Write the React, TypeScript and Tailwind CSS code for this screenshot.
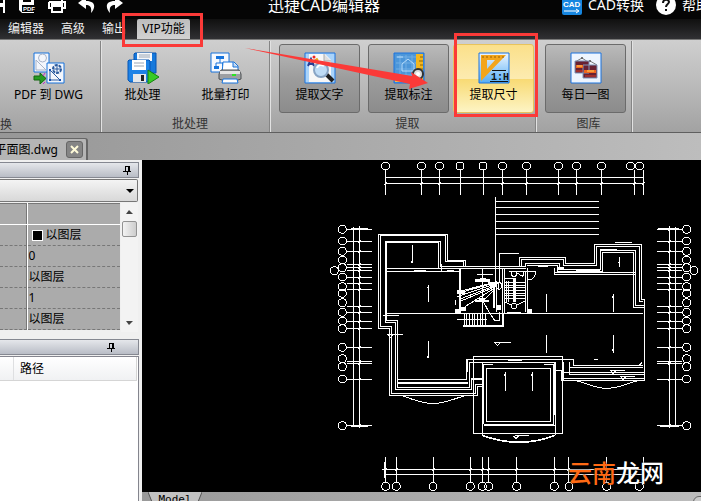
import type { ReactNode } from "react";

const layerRows = [
  { value: "以图层", swatch: true },
  { value: "0", swatch: false },
  { value: "以图层", swatch: false },
  { value: "1", swatch: false },
  { value: "以图层", swatch: false },
];

const topAxis = [182, 289, 343, 405, 474, 532, 604, 700, 755, 830, 916, 943];
const topTicks = [182, 289, 343, 405, 474, 532, 604, 700, 755, 830, 928, 955];
const bottomAxis = [182, 214, 324, 436, 472, 491, 575, 688, 732, 845, 943];
const bottomTicks = [181, 214, 325, 436, 472, 491, 575, 688, 730, 845, 955];
const sideAxis = [223, 258, 289, 315, 338, 366, 395, 415, 443, 472, 498, 521, 577, 611, 635, 672, 812];
const sideTicks = [222, 259, 289, 328, 337, 346, 367, 386, 403, 454, 472, 499, 520, 577, 618, 625, 672, 812];
const hatch = [139, 157, 178, 199, 220, 238];
const treads = [127, 135, 143, 151, 159, 167, 175];
const risers = [42, 50, 58, 66, 74, 82, 90, 98, 106];

function FloorPlan() {
  return (
    <svg
      viewBox="-549 15 1677 996"
      preserveAspectRatio="xMinYMin meet"
      className="block w-full"
      fill="none"
      stroke="#fff"
      strokeWidth="3"
      shapeRendering="crispEdges"
      role="img"
      aria-label="平面图"
    >
      {topAxis.map((x) => <circle key={x} cx={x} cy={33} r={12} />)}
      {topTicks.map((x) => <path key={x} d={`M${x} 45V119M${x - 4} 88l8 -6`} />)}
      <path d="M180 67H958M180 85H958M180 60V119" />
      {hatch.map((y) => <path key={y} d={`M512 ${y}H822`} />)}
      <path d="M512 126V385M524 385V295H582" />

      {sideAxis.map((y) => (
        <g key={y}>
          <circle cx={52} cy={y} r={12} />
          <circle cx={1085} cy={y} r={12} />
        </g>
      ))}
      {sideTicks.map((y) => (
        <path key={y} d={`M65 ${y}H141M100 ${y + 4}l7 -8M996 ${y}H1072M1029 ${y + 4}l7 -8`} />
      ))}
      <circle cx={28} cy={347} r={12} />
      <circle cx={1107} cy={347} r={12} />
      <path d="M85 215V817M103 213V820M1033 213V820M1052 215V817" />
      <path d="M79 220H130M79 813H130M1000 220H1062M1006 813H1062" strokeWidth="5" />

      {bottomAxis.map((x) => <circle key={x} cx={x} cy={994} r={12} />)}
      {bottomTicks.map((x) => <path key={x} d={`M${x} 906V982M${x - 4} 946l8 -6`} />)}
      <path d="M172 943H955M178 958H955M178 920V968" />

      {/* west wing walls */}
      <path d="M422 335V315H367V237H161V521H194V721H457V693H472" />
      <path d="M416 335V320H362V242H167V515H200V716H452V688H472" />
      <path d="M346 335V258H180V503H211V704H440V672H472" />
      <path d="M341 340V263H185V497H217V698H434V622H690" />
      <path d="M185 340H404M185 348H404M345 340H604M350 335H604M350 326V348M404 348V475M185 475H953" />
      <path d="M266 346H304M366 346H386M219 683H428" strokeWidth="5" />
      <path d="M219 674H425V614H745V632H953M175 481H222M187 538H234M190 540l6 8l8 -8" />
      <path d="M228 721C270 735 290 746 325 746S390 729 425 721" />

      {/* bay room */}
      <path d="M445 605H712V835H445Z" />
      <path d="M475 808V628H504M472 622V840M478 808H685V628H658M690 622V840M484 640H677V800H484Z" />
      <path d="M472 622V840M690 622V780" strokeWidth="5" />
      <path d="M478 811H690" />
      <path d="M472 841Q582 882 691 841" strokeWidth="5" />
      <path d="M569 841H611M566 843l7 7l8 -7M507 562H558M510 564l7 7l8 -7" />
      <path d="M425 614V652M438 670H470M690 646H714V676" strokeWidth="5" />

      {/* east wing walls */}
      <path d="M583 335V308H721V326H809V269H949V434H958V675H710V646" />
      <path d="M589 335V313H716V331H815V274H943V440H953" />
      <path d="M602 335V325H703V343H826V287H931V452H958" />
      <path d="M607 331H698V348H832V292H926V457H958" />
      <path d="M688 340V358H931M688 352H931M870 263H920M826 282H875" />
      <path d="M733 622V658H958M735 638H953M716 652H958M716 622V670H958" />
      <path d="M750 631H810M850 631H953M592 616H550M640 334H670" strokeWidth="5" />
      <path d="M753 348H825M698 341H718" strokeWidth="9" />
      <path d="M755 678C790 685 810 700 845 700S905 686 935 678" />
      <path d="M855 646H900M858 648l6 7l8 -7M884 664H930M888 666l6 7l8 -7M808 615l10 -3M943 630l8 -8" />

      {/* direction marks */}
      <path d="M262 270V323M310 390V440M883 306V335M664 418V470M865 418V470M310 558V610M664 540V593M865 540V593M541 650V708M622 650V708" />
      <path d="M259 318V323M307 395V400M880 320V325M862 424V429M307 603V608M862 583V588M538 658V663M619 658V663" />

      {/* stair core */}
      <g transform="translate(375 255)">
        <path d="M30 84V218M158 84V262M163 84V222M232 84V218M226 95V215M97 84V220M82 103H128M132 125V205M138 122V215M145 125V150" />
        <path d="M132 125V205M30 84V218M232 84V218M38 258H160V222" strokeWidth="5" />
        <path d="M130 130L22 160M130 134L22 170M132 138L28 178M132 142L30 184M134 144L45 200M136 146L100 182M128 128L45 150" />
        <g fill="#fff" stroke="none">
          <path d="M75 118h14v-4h18v4h12v8h-44zM75 179h12v-4h18v4h12v8H75zM112 128l28-4v14l-16 8zM22 150h24v12H22zM30 200h18v14H30zM138 195h14v14h-14zM16 206h12v14H16zM235 206h10v14h-10zM188 115h9v72h-9z" />
        </g>
        <ellipse cx="147" cy="137" rx="7" ry="11" />
        <circle cx="192" cy="101" r="8" />
        <circle cx="192" cy="198" r="8" />
        <path d="M178 93H257C257 112 245 122 232 118M200 98L218 110M218 110L222 96M165 187L182 194M202 194L224 184M163 116H195M170 122V186M176 122V186" />
        {treads.map((y) => <path key={y} d={`M163 ${y}H228`} />)}
        {risers.map((x) => <path key={x} d={`M${x} 222V257`} />)}
        <path d="M22 239H110M100 185L118 218L133 240H147V215M172 216H212M16 180V195" />
      </g>
    </svg>
  );
}

function PdfIcon() {
  return (
    <svg width="32" height="32" viewBox="0 0 32 32" fill="none">
      <path d="M1 1h15v19H1z" fill="#f3f6fc" stroke="#1673dc" />
      <circle cx="9.500" cy="6" r="4" stroke="#a8b4c8" />
      <path d="M3 8v10h10z" stroke="#a8b4c8" />
      <path d="M14 11h17v20H14z" fill="#f3f6fc" stroke="#1673dc" />
      <circle cx="24" cy="17" r="4" stroke="#2b5b9e" strokeWidth="2" strokeDasharray="3 1" />
      <path d="M20 17h8M24 13v8M17 18v10h10z" stroke="#2b5b9e" />
      <path d="M16 17h2v2h-2zM16 27h2v2h-2zM26 27h2v2h-2z" fill="#1650b0" />
      <path d="M1 24h6v-3l6 5.500l-6 5.500v-4H1z" fill="#259c23" stroke="#12660f" />
      <path d="M12 21l-2 3M12 30l-2 2" stroke="#c32ac8" />
    </svg>
  );
}

function BatchIcon() {
  return (
    <svg width="32" height="32" viewBox="0 0 32 32">
      <path d="M8 1h21v20H7V2z" fill="#1679dc" stroke="#0755b3" />
      <path d="M10 1h15v8H10z" fill="#f5f7fa" />
      <path d="M12 3h11M12 5h11" stroke="#9aa6b5" />
      <path d="M2 8h20l1 1v21H3l-2-2V9z" fill="#1d82e6" stroke="#0755b3" />
      <path d="M5 8h14v10H5z" fill="#fff" />
      <path d="M7 11h10M7 14h10" stroke="#9aa6b5" />
      <path d="M6 22h13v8H6z" fill="#e4e7ea" />
      <path d="M14 23h3v6h-3z" fill="#222" />
      <path d="M21 18l11 7l-11 7z" fill="#39cc26" stroke="#148310" />
    </svg>
  );
}

function PrintIcon() {
  return (
    <svg width="32" height="32" viewBox="0 0 32 32">
      <path d="M1 1h18v19H1z" fill="#f5f8fd" stroke="#1673dc" />
      <path d="M6 4h8v3H6zM4 14h5v3H4zM12 11h5v3h-5z" fill="#1673dc" />
      <path d="M10 7v4M6 14v-3h8" fill="none" stroke="#1673dc" />
      <path d="M13 10h11l4 4v8H12z" fill="#fff" stroke="#1673dc" />
      <path d="M23 10v5h5" fill="#bfd5ee" stroke="#1673dc" />
      <path d="M11 18h18l2 4v5l-3 1H12l-3-1v-5z" fill="#9c9fa3" stroke="#4d5053" />
      <path d="M10 19h20v3H10z" fill="#e3e3e3" />
      <path d="M22 22h4v2h-4z" fill="#2be127" />
      <path d="M13 27h14l1 4H12z" fill="#fff" stroke="#1673dc" />
    </svg>
  );
}

function TextIcon() {
  return (
    <svg width="32" height="32" viewBox="0 0 32 32" fill="none">
      <path d="M1 1h30v30H1z" fill="#a9d3fa" stroke="#1a73de" />
      <path d="M5 2h16l6 6v22H5z" fill="#f7f7f7" />
      <path d="M20 2v7h7" fill="#ddd" stroke="#aaa" />
      <path d="M4 14l3-7l3 7M5 12h4" stroke="#283d94" strokeWidth="2" />
      <circle cx="10" cy="5" r="1.500" fill="#e22" />
      <path d="M11 9l3-2" stroke="#eaa01c" strokeWidth="3" />
      <path d="M22 22l7 7" stroke="#202020" strokeWidth="4" />
      <circle cx="17" cy="18" r="7" fill="#bfdcf6" stroke="#88a4c4" strokeWidth="2" />
      <path d="M13 16c1-3 4-4 7-2" stroke="#fff" strokeWidth="2" />
    </svg>
  );
}

function MarkIcon() {
  return (
    <svg width="32" height="32" viewBox="0 0 32 32" fill="none">
      <path d="M1 1h30v30H1z" fill="#4c96d9" stroke="#1a73de" />
      <path d="M3 5h20M3 11h20M3 17h20M3 23h18M7 3v24M13 3v24M19 3v24" stroke="#70aee4" />
      <path d="M9 19v-7l6-5l6 5v7zM4 5h6" stroke="#b7dcfb" />
      <path d="M23 2h7v28h-7z" fill="#f3b61f" />
      <path d="M27 5h3M26 9h4M27 13h3M26 17h4" stroke="#8e640b" />
      <path d="M2 25h22v5H2z" fill="#edc14f" />
      <circle cx="25" cy="22" r="5" fill="#ddd" stroke="#333" strokeWidth="2" />
      <circle cx="25" cy="22" r="2" fill="#fff" />
      <path d="M24 27l-5 3M27 27l2 3" stroke="#444" strokeWidth="2" />
    </svg>
  );
}

function SizeIcon() {
  return (
    <svg width="32" height="32" viewBox="0 0 32 32" fill="none">
      <defs>
        <linearGradient id="sizeBg" x2="0" y2="1">
          <stop stopColor="#eef6ff" />
          <stop offset="1" stopColor="#56adf5" />
        </linearGradient>
      </defs>
      <path d="M1 1h30v30H1z" fill="url(#sizeBg)" stroke="#1a73de" />
      <path d="M3 3h25L3 29zM9 8v9l8-9z" fill="#f3a51c" fillRule="evenodd" />
      <path d="M5 4v2M9 4v2M13 4v2M17 4v2M21 4v2M25 4v2" stroke="#9a6205" />
      <path d="M14 18.500h14M12 29.500h18" stroke="#111" />
      <text x="13" y="28" fill="#111" className="font-['Liberation_Mono'] text-[10px] font-bold">1:H</text>
    </svg>
  );
}

function GalleryIcon() {
  return (
    <svg width="32" height="32" viewBox="0 0 32 32" fill="none">
      <path d="M1 1h30v30H1z" fill="#eef5fe" stroke="#1a73de" />
      <path d="M5 10l7-4l6 4M13 13l7-4l7 4" stroke="#777" />
      <circle cx="12" cy="6" r="1" fill="#555" />
      <circle cx="20" cy="9" r="1" fill="#555" />
      <path d="M5 9h14v12H5zM13 13h14v13H13z" fill="#692132" stroke="#8096b8" />
      <path d="M6 13h7v3H6zM14 18h12v3H14z" fill="#ef661e" />
      <path d="M7 14h5M17 19h7" stroke="#ffd258" />
      <path d="M6 19h7M15 24h11" stroke="#da3d24" />
    </svg>
  );
}

function Tool({ label, icon, look }: { label: string; icon: ReactNode; look: "flat" | "raised" | "hot" }) {
  const looks = {
    flat: "border-transparent",
    raised: "border-[#6b6b6b] bg-linear-to-b from-[#bababa] via-[#9c9c9c] to-[#8c8c8c]",
    hot: "border-[#e8c35c] bg-[linear-gradient(#fbe08a,#fcebb0_50%,#f8da74_51%,#fdf4c4)]",
  };
  return (
    <button
      type="button"
      className={`relative flex h-[69px] w-[81px] shrink-0 flex-col items-center rounded-[3px] border pt-[7px] text-xs leading-[18px] whitespace-nowrap text-black ${looks[look]}`}
    >
      {icon}
      <span className="mt-[2px]">{label}</span>
      {look === "hot" && <span className="pointer-events-none absolute -top-3 -right-[5px] -bottom-[5px] left-0 border-[3px] border-[#fb3a38]" />}
    </button>
  );
}

function Group({ caption, className, children }: { caption: string; className: string; children: ReactNode }) {
  return (
    <section className={`flex h-[91px] shrink-0 flex-col border-r border-[#e2e2e2] pt-[3px] shadow-[inset_-1px_0_#858585] ${className}`}>
      <div className="flex">{children}</div>
      <h2 className="mt-auto text-center text-xs leading-4 text-[#333]">{caption}</h2>
    </section>
  );
}

function PanelBar({ pin }: { pin: string }) {
  return (
    <div className={`flex h-4 w-[139px] items-center justify-end border border-l-0 border-[#858891] bg-linear-to-b from-[#e5e7eb] to-[#b9bdc6] ${pin}`}>
      <button type="button" aria-label="固定" className="block">
        <svg width="8" height="10" viewBox="0 0 8 10" fill="none" stroke="#000" shapeRendering="crispEdges">
          <path d="M2 6V1h4v5M5 1v5M0 6h8M4 6v4" />
        </svg>
      </button>
    </div>
  );
}

export default function App() {
  return (
    <div className="flex min-h-screen flex-col overflow-hidden bg-black font-['Noto_Sans','Noto_Sans_CJK_SC',sans-serif] text-xs">
      <header className="flex h-[19px] shrink-0 items-center bg-[#050505] pb-[9px] text-white">
        <div className="flex h-[14px] w-[268px] shrink-0 items-center">
          <button type="button" aria-label="保存" className="w-[19px]">
            <svg width="6" height="18" viewBox="0 0 6 18"><path d="M0 0h5v17H0z" fill="#fff" /><path d="M0 3h3v4H0zM0 11h3v6H0z" fill="#050505" /></svg>
          </button>
          <button type="button" aria-label="另存为 PDF" className="w-[29px]">
            <svg width="17" height="18" viewBox="0 0 17 18">
              <path d="M1 0h14v17H3l-3-3V0z" fill="#fff" />
              <path d="M4 1h8v5H4zM3 9h14v7H3z" fill="#050505" />
              <text x="4" y="15" fill="#fff" className="font-['Liberation_Sans'] text-[6px] font-bold">PDF</text>
            </svg>
          </button>
          <button type="button" aria-label="打印" className="w-[30px]">
            <svg width="18" height="18" viewBox="0 0 18 18" fill="none" stroke="#fff" strokeWidth="2">
              <path d="M4 1h10v4M1 6h16v6h-3M4 12H1V6M4 10h10v6H4z" /><path d="M3 8h12" />
            </svg>
          </button>
          <button type="button" aria-label="撤销" className="w-[27px]">
            <svg width="18" height="18" viewBox="0 0 18 18"><path d="M8 1L0 7l8 6V9c4 0 6 2 5 8c4-4 6-12-5-12z" fill="#fff" /></svg>
          </button>
          <button type="button" aria-label="重做">
            <svg width="18" height="18" viewBox="0 0 18 18"><path d="M10 1l8 6l-8 6V9c-4 0-6 2-5 8C1 13-1 5 10 5z" fill="#fff" /></svg>
          </button>
        </div>
        <h1 className="text-base leading-none whitespace-nowrap">迅捷CAD编辑器</h1>
        <div className="-mr-[9px] ml-auto flex shrink-0 items-center text-sm leading-none whitespace-nowrap">
          <button type="button" className="flex items-center gap-[6px]">
            <svg width="20" height="20" viewBox="0 0 20 20">
              <rect width="20" height="20" rx="2" fill="#1686e0" />
              <text x="1" y="12" fill="#fff" className="font-['Liberation_Sans'] text-[8px] font-bold">CAD</text>
              <path d="M2 16h14M14 14l3 2l-3 2" fill="none" stroke="#fff" />
            </svg>
            CAD转换
          </button>
          <button type="button" className="ml-3 flex items-center gap-[6px]">
            <svg width="20" height="20" viewBox="0 0 20 20">
              <circle cx="10" cy="10" r="10" fill="#fff" />
              <path d="M7 8c0-4 6-4 6-1c0 2-3 2-3 5M10 14v2" fill="none" stroke="#111" strokeWidth="2" />
            </svg>
            帮助
          </button>
        </div>
      </header>

      <nav className="flex h-5 shrink-0 items-center bg-linear-to-b from-[#101010] to-[#303033] pl-2 leading-[18px] whitespace-nowrap text-[#f0f0f0]">
        <button type="button" className="mr-[17px]">编辑器</button>
        <button type="button" className="mr-[17px]">高级</button>
        <button type="button" className="w-[35px] text-left">输出</button>
        <button type="button" className="relative h-5 w-[53px] rounded-t-[2px] bg-linear-to-b from-[#bdbdbd] to-[#d2d2d2] text-black">
          VIP功能
          <span className="pointer-events-none absolute -top-[6px] -right-[13px] -bottom-2 -left-[15px] z-10 border-[3px] border-[#fb3a38]" />
        </button>
      </nav>

      <main className="flex flex-1 flex-col">
        <div className="relative flex h-[94px] shrink-0 items-end border-t border-b border-t-[#777] border-b-[#5f5f5f] bg-linear-to-b from-[#cfcfcf] via-[#bababa] to-[#a2a2a2]">
          <Group caption="" className="w-[102px] pl-2">
            <Tool label="PDF 到 DWG" icon={<PdfIcon />} look="flat" />
            <span className="-ml-[89px] self-end leading-4 text-[#333]"><span className="relative top-5">换</span></span>
          </Group>
          <Group caption="批处理" className="w-[169px] pl-2">
            <div className="-ml-2 flex gap-[2px]">
              <Tool label="批处理" icon={<BatchIcon />} look="flat" />
              <Tool label="批量打印" icon={<PrintIcon />} look="flat" />
            </div>
          </Group>
          <Group caption="提取" className="w-[266px] pl-2">
            <div className="flex gap-2">
              <Tool label="提取文字" icon={<TextIcon />} look="raised" />
              <Tool label="提取标注" icon={<MarkIcon />} look="raised" />
              <div className="-ml-1"><Tool label="提取尺寸" icon={<SizeIcon />} look="hot" /></div>
            </div>
          </Group>
          <Group caption="图库" className="w-[96px] pl-2">
            <Tool label="每日一图" icon={<GalleryIcon />} look="raised" />
          </Group>
          <svg className="pointer-events-none absolute top-0 left-[245px]" width="184" height="54" viewBox="245 40 184 54">
            <path d="M245 48L412 76L411 72L428 83L409 89L410 84Z" fill="#fb3a38" />
          </svg>
        </div>

        <div className="flex h-[27px] shrink-0 items-end bg-linear-to-r from-[#979797] to-[#bdbdbd]">
          <div className="flex h-[22px] w-[88px] items-center justify-end gap-2 rounded-tr-[3px] border-t border-r-2 border-[#666] bg-[#b5b5b5] pr-[3px] whitespace-nowrap">
            <span className="leading-[18px]">平面图.dwg</span>
            <button type="button" aria-label="关闭" className="flex h-[17px] w-[17px] shrink-0 items-center justify-center rounded-[3px] border border-[#666] bg-[#858585]">
              <svg width="9" height="9" viewBox="0 0 9 9"><path d="M1 1l7 7M8 1l-7 7" stroke="#fffbd8" strokeWidth="2" /></svg>
            </button>
          </div>
        </div>

        <div className="flex flex-1">
          <aside className="flex w-[142px] shrink-0 flex-col bg-[#f0f0f0] pt-[2px]">
            <PanelBar pin="pr-[7px]" />
            <div className="relative mt-[1px] h-[23px] w-[138px]">
              <select aria-label="对象" className="h-full w-full appearance-none rounded-r-[2px] border border-l-0 border-[#777] bg-linear-to-b from-[#f4f4f4] to-[#d8d8d8]">
                <option></option>
              </select>
              <svg className="pointer-events-none absolute top-[10px] right-1" width="8" height="4" viewBox="0 0 8 4"><path d="M0 0h8L4 4z" /></svg>
            </div>
            <div className="mt-[1px] flex h-[129px] w-[138px]">
              <table className="h-[127px] w-[120px] table-fixed border-collapse border-t border-[#777] bg-[#ababab]">
                <tbody>
                  <tr className="h-[21px] border-b border-white">
                    <td className="w-[27px] border-r border-white p-0 shadow-[inset_-1px_0_#777]"></td>
                    <td className="p-0"></td>
                  </tr>
                  {layerRows.map((row, i) => (
                    <tr key={i} className="h-[21px]">
                      <td className="border-r border-b border-r-white border-b-[#777] p-0 shadow-[inset_-1px_0_#777] [border-bottom-style:dashed]"></td>
                      <td className="border-b border-dashed border-[#777] p-0 pl-[1px] leading-5 text-black">
                        <div className="flex items-center">
                          {row.swatch && <span className="mx-[3px] h-[11px] w-[11px] border border-white bg-black" />}
                          {row.value}
                        </div>
                      </td>
                    </tr>
                  ))}
                </tbody>
              </table>
              <div className="ml-[1px] flex w-[17px] flex-col items-center bg-[#f3f3f3]">
                <button type="button" aria-label="向上" className="flex h-[18px] w-full items-center justify-center">
                  <svg width="7" height="4" viewBox="0 0 7 4"><path d="M0 4h7L3 0z" fill="#444" /></svg>
                </button>
                <div className="h-4 w-[15px] rounded-[2px] border border-[#929292] bg-linear-to-r from-[#f3f3f3] to-[#cdcdcd]" />
                <button type="button" aria-label="向下" className="mt-auto flex h-[18px] w-full items-center justify-center">
                  <svg width="7" height="4" viewBox="0 0 7 4"><path d="M0 0h7L3 4z" fill="#444" /></svg>
                </button>
              </div>
            </div>
            <div className="mt-[7px]"><PanelBar pin="pr-[23px]" /></div>
            <div className="mt-[1px] w-[139px] flex-1 border-t border-r border-[#84858e] bg-white">
              <div className="mr-[1px] flex h-6 items-center border-r border-b border-[#d5d5d5] bg-linear-to-b from-white to-[#f0f1f3] leading-[18px]">
                <span className="h-full w-[14px] border-r border-[#dedfe1]" />
                <span className="pl-[6px]">路径</span>
              </div>
            </div>
          </aside>

          <div className="relative flex flex-1 flex-col bg-black">
            <div className="flex-1"><FloorPlan /></div>
            <p className="absolute right-[37px] bottom-3 text-2xl leading-8 font-medium whitespace-nowrap text-white [text-shadow:0_0_3px_#000]">
              <span className="text-[#ff6a14]">云南</span>龙网
            </p>
            <div className="flex h-[9px] shrink-0 items-start overflow-hidden bg-linear-to-r from-[#999] to-[#bcbcbc]">
              <button type="button" className="relative ml-[6px] h-[15px] w-[54px] shrink-0 font-['DejaVu_Sans_Mono',monospace] text-[11px] leading-[15px]">
                <svg className="absolute inset-0" width="54" height="15" viewBox="0 0 54 15"><path d="M0 0l6 15h42l6-15" fill="#c2c2c2" stroke="#555" /></svg>
                <span className="relative">Model</span>
              </button>
              <span className="mt-1 -mr-2 ml-auto h-3 w-4 shrink-0 rounded-full border border-[#666] bg-[#ccc]" />
            </div>
          </div>
        </div>
      </main>
    </div>
  );
}
